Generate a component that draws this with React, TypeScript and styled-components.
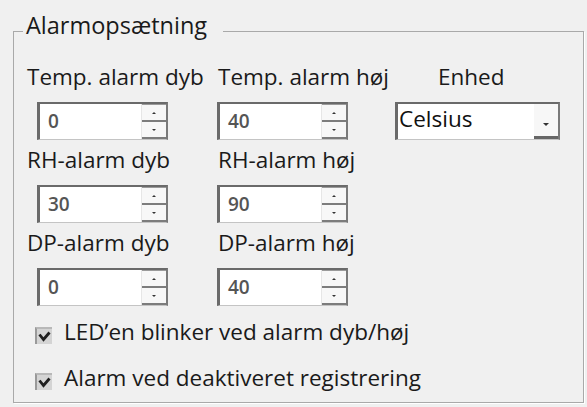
import React from 'react';
import styled, { createGlobalStyle } from 'styled-components';

const GlobalStyle = createGlobalStyle`
  html, body {
    margin: 0;
    padding: 0;
    background: #f0f0f0;
  }
  body {
    font-family: "Open Sans", "Noto Sans", sans-serif;
    color: #1a1a1a;
  }
`;

const Page = styled.div`
  width: 587px;
  height: 407px;
  padding: 13px 0 0 13px;
  box-sizing: border-box;
`;

const GroupBox = styled.fieldset`
  margin: 0;
  padding: 0;
  width: 571px;
  height: 390px;
  box-sizing: border-box;
  border: 1px solid #a9a9a9;
  box-shadow: 1px 1px 0 #ffffff;
`;

const Legend = styled.legend`
  margin-left: 9px;
  padding: 0 16px 12px 3px;
  font-size: 23.5px;
  line-height: 25px;
`;

const Grid = styled.div`
  display: grid;
  grid-template-columns: 190px 178px 160px;
  margin: 7px 0 0 13px;
`;

const Label = styled.div<{ $indent?: number }>`
  height: 24px;
  line-height: 24px;
  padding-top: 8px;
  margin-bottom: 13px;
  padding-left: ${(p) => p.$indent ?? 0}px;
  font-size: 22.5px;
  white-space: nowrap;
`;

const Cell = styled.div<{ $indent?: number }>`
  padding-left: ${(p) => p.$indent ?? 0}px;
  height: 38px;
`;

const Field = styled.div<{ $width: number }>`
  display: flex;
  width: ${(p) => p.$width}px;
  height: 38px;
  box-sizing: border-box;
  background: #ffffff;
  border-top: 2px solid #6a6a6a;
  border-left: 3px solid #6a6a6a;
  border-right: 2px solid #7a7a7a;
  border-bottom: 1px solid #c4c4c4;
`;

const Value = styled.div`
  flex: 1;
  padding: 5px 0 0 8px;
  font-size: 19px;
  font-weight: 600;
  color: #555;
  line-height: 24px;
`;

const ComboText = styled.div`
  flex: 1;
  padding: 1px 0 0 1px;
  font-size: 22.5px;
  line-height: 28px;
  color: #111;
`;

const SpinButtons = styled.div`
  display: flex;
  flex-direction: column;
  width: 24px;
  border-left: 1px solid #e6e6e6;
`;

const SpinButton = styled.div<{ $down?: boolean }>`
  flex: 1;
  display: flex;
  align-items: center;
  justify-content: center;
  background: #f7f7f7;
  border-top: ${(p) => (p.$down ? '2px solid #7c7c7c' : '1px solid #9a9a9a')};
  border-bottom: ${(p) => (p.$down ? '2px solid #7c7c7c' : 'none')};
`;

const Arrow = styled.span<{ $down?: boolean; $size?: number }>`
  width: 0;
  height: 0;
  border-left: ${(p) => p.$size ?? 3}px solid transparent;
  border-right: ${(p) => p.$size ?? 3}px solid transparent;
  ${(p) =>
    p.$down
      ? `border-top: ${p.$size ?? 3}px solid #333;`
      : `border-bottom: ${p.$size ?? 3}px solid #333;`}
`;

const DropButton = styled.div`
  width: 24px;
  display: flex;
  align-items: center;
  justify-content: center;
  padding-top: 8px;
  box-sizing: border-box;
  background: #f7f7f7;
  border-bottom: 3px solid #666;
`;

const Checks = styled.div`
  display: flex;
  flex-direction: column;
  gap: 20px;
  margin: 13px 0 0 21px;
`;

const CheckRow = styled.div`
  display: flex;
  align-items: center;
  gap: 12px;
  font-size: 22.5px;
  line-height: 26px;
  white-space: nowrap;
`;

const CheckBox = styled.span`
  display: flex;
  align-items: center;
  justify-content: center;
  width: 17px;
  height: 17px;
  margin-top: 7px;
  box-sizing: border-box;
  background: #d4d4d4;
  border-top: 2px solid #b8b8b8;
  border-left: 2px solid #999;
`;

const Spinner = ({ value }: { value: string }) => (
  <Field $width={131}>
    <Value>{value}</Value>
    <SpinButtons>
      <SpinButton>
        <Arrow $size={2} />
      </SpinButton>
      <SpinButton $down>
        <Arrow $down $size={2} />
      </SpinButton>
    </SpinButtons>
  </Field>
);

const Check = ({ label }: { label: string }) => (
  <CheckRow>
    <CheckBox>
      <svg width="13" height="11" viewBox="0 0 13 11">
        <path d="M1.5 3.5 L5.5 8.5 L11.5 1.5" fill="none" stroke="#1e1e1e" strokeWidth="2.8" />
      </svg>
    </CheckBox>
    {label}
  </CheckRow>
);

export default function App() {
  return (
    <>
      <GlobalStyle />
      <Page>
        <GroupBox>
          <Legend>Alarmopsætning</Legend>
          <Grid>
            <Label>Temp. alarm dyb</Label>
            <Label $indent={1}>Temp. alarm høj</Label>
            <Label $indent={43}>Enhed</Label>

            <Cell $indent={10}>
              <Spinner value="0" />
            </Cell>
            <Cell>
              <Spinner value="40" />
            </Cell>
            <Cell>
              <Field $width={165}>
                <ComboText>Celsius</ComboText>
                <DropButton>
                  <Arrow $down $size={3} />
                </DropButton>
              </Field>
            </Cell>

            <Label>RH-alarm dyb</Label>
            <Label $indent={1}>RH-alarm høj</Label>
            <div />

            <Cell $indent={10}>
              <Spinner value="30" />
            </Cell>
            <Cell>
              <Spinner value="90" />
            </Cell>
            <div />

            <Label>DP-alarm dyb</Label>
            <Label $indent={1}>DP-alarm høj</Label>
            <div />

            <Cell $indent={10}>
              <Spinner value="0" />
            </Cell>
            <Cell>
              <Spinner value="40" />
            </Cell>
            <div />
          </Grid>
          <Checks>
            <Check label="LED’en blinker ved alarm dyb/høj" />
            <Check label="Alarm ved deaktiveret registrering" />
          </Checks>
        </GroupBox>
      </Page>
    </>
  );
}
